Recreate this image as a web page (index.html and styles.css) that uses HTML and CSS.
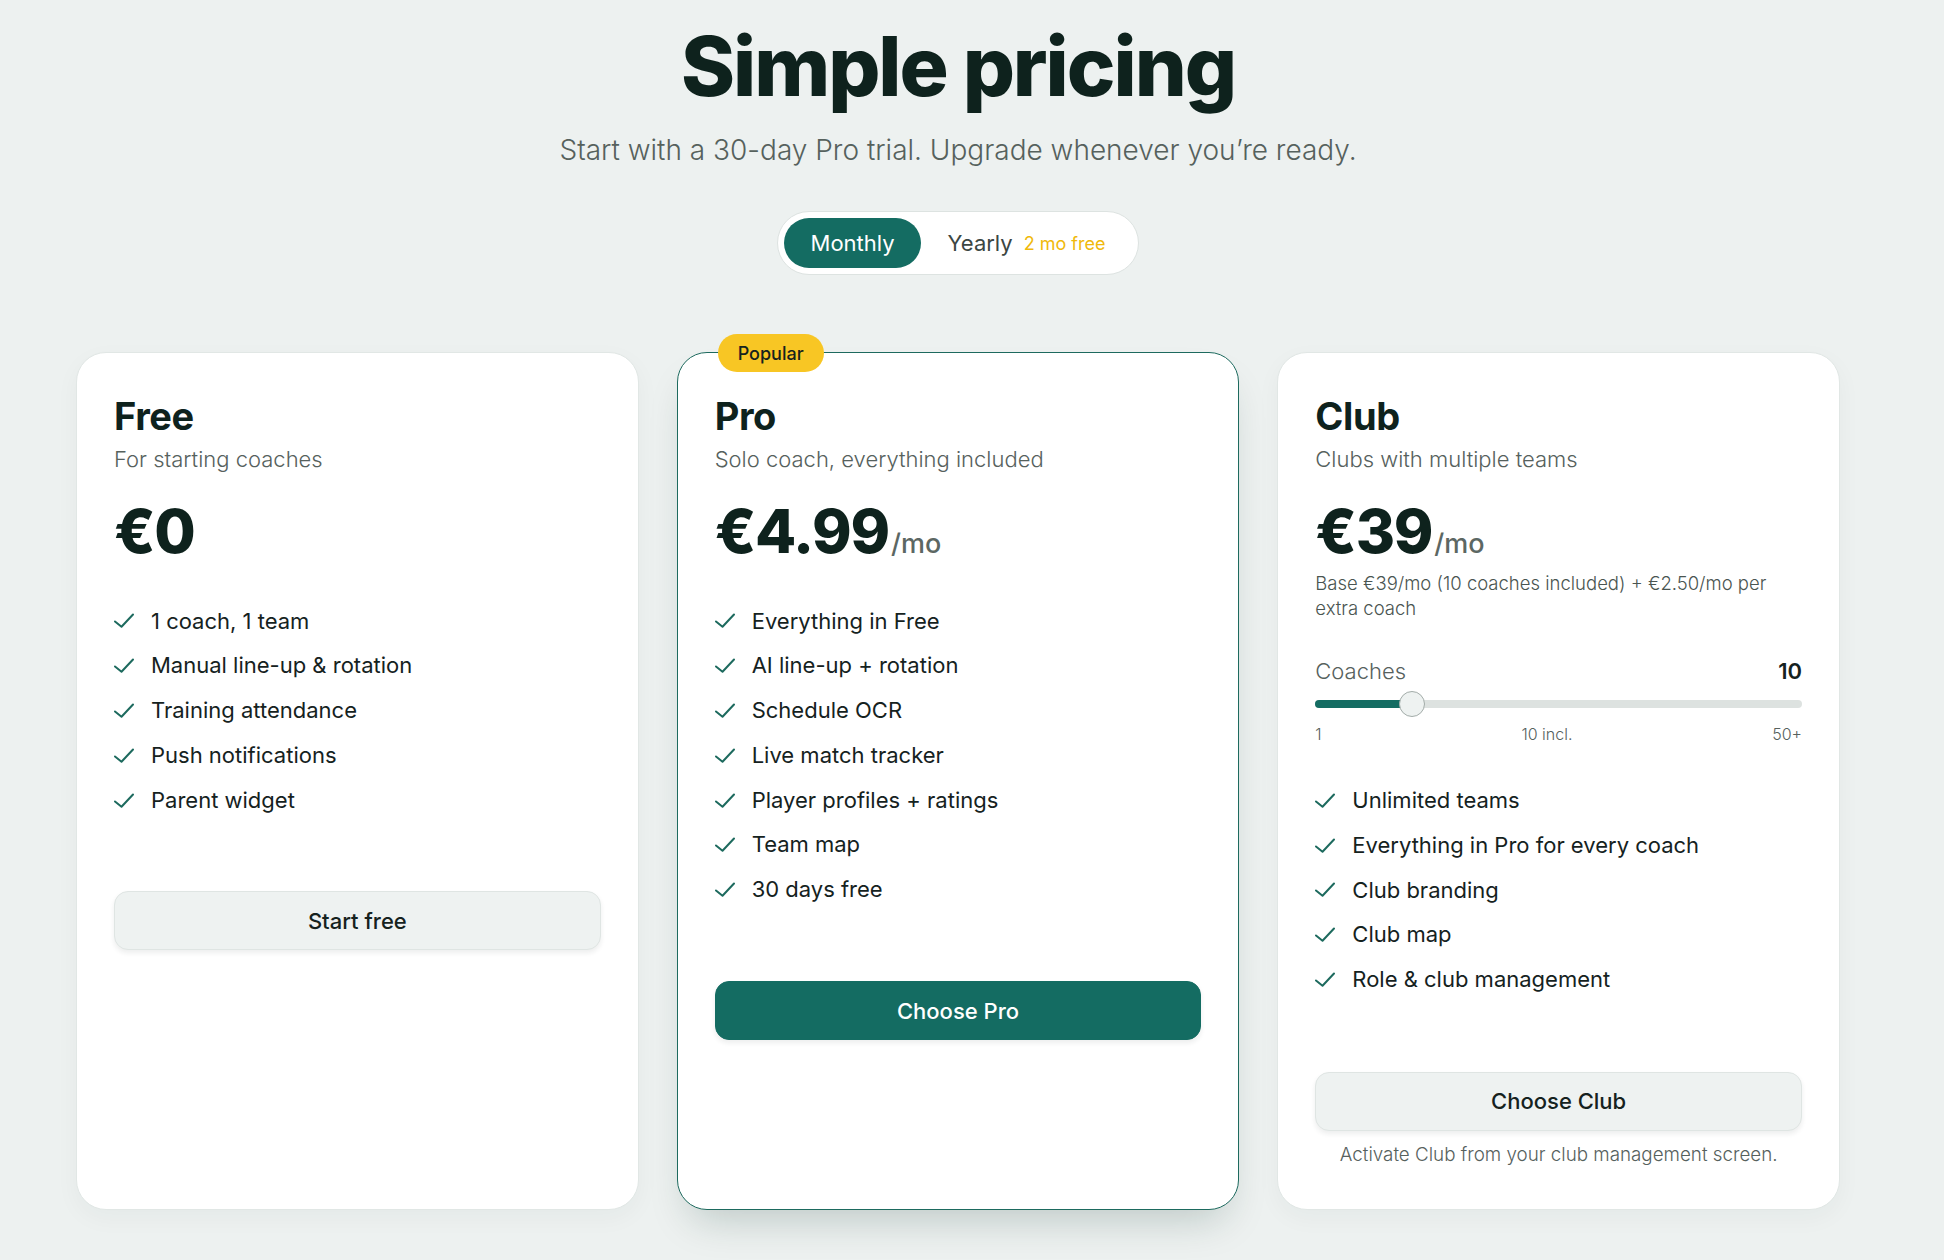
FILE: index.html
```html
<!DOCTYPE html>
<html lang="en">
<head>
<meta charset="utf-8">
<title>Simple pricing</title>
<link rel="stylesheet" href="styles.css">
</head>
<body>
<main class="page">
  <header class="hero">
    <h1 class="hero-title">Simple pricing</h1>
    <p class="hero-sub">Start with a 30-day Pro trial. Upgrade whenever you’re ready.</p>
    <div class="billing-toggle">
      <button class="toggle-btn is-active">Monthly</button>
      <button class="toggle-btn">Yearly <span class="toggle-note">2 mo free</span></button>
    </div>
  </header>

  <section class="plans">
    <article class="plan">
      <h2 class="plan-name">Free</h2>
      <p class="plan-tagline">For starting coaches</p>
      <div class="plan-price">€0</div>
      <ul class="features">
        <li class="feature"><svg class="check" viewBox="0 0 20 15"><path d="M1 8.5 7.5 13.8 19 1.5"/></svg>1 coach, 1 team</li>
        <li class="feature"><svg class="check" viewBox="0 0 20 15"><path d="M1 8.5 7.5 13.8 19 1.5"/></svg>Manual line-up &amp; rotation</li>
        <li class="feature"><svg class="check" viewBox="0 0 20 15"><path d="M1 8.5 7.5 13.8 19 1.5"/></svg>Training attendance</li>
        <li class="feature"><svg class="check" viewBox="0 0 20 15"><path d="M1 8.5 7.5 13.8 19 1.5"/></svg>Push notifications</li>
        <li class="feature"><svg class="check" viewBox="0 0 20 15"><path d="M1 8.5 7.5 13.8 19 1.5"/></svg>Parent widget</li>
      </ul>
      <button class="plan-btn">Start free</button>
    </article>

    <article class="plan plan--featured">
      <span class="plan-badge">Popular</span>
      <h2 class="plan-name">Pro</h2>
      <p class="plan-tagline">Solo coach, everything included</p>
      <div class="plan-price">€4.99<span class="plan-period">/mo</span></div>
      <ul class="features">
        <li class="feature"><svg class="check" viewBox="0 0 20 15"><path d="M1 8.5 7.5 13.8 19 1.5"/></svg>Everything in Free</li>
        <li class="feature"><svg class="check" viewBox="0 0 20 15"><path d="M1 8.5 7.5 13.8 19 1.5"/></svg>AI line-up + rotation</li>
        <li class="feature"><svg class="check" viewBox="0 0 20 15"><path d="M1 8.5 7.5 13.8 19 1.5"/></svg>Schedule OCR</li>
        <li class="feature"><svg class="check" viewBox="0 0 20 15"><path d="M1 8.5 7.5 13.8 19 1.5"/></svg>Live match tracker</li>
        <li class="feature"><svg class="check" viewBox="0 0 20 15"><path d="M1 8.5 7.5 13.8 19 1.5"/></svg>Player profiles + ratings</li>
        <li class="feature"><svg class="check" viewBox="0 0 20 15"><path d="M1 8.5 7.5 13.8 19 1.5"/></svg>Team map</li>
        <li class="feature"><svg class="check" viewBox="0 0 20 15"><path d="M1 8.5 7.5 13.8 19 1.5"/></svg>30 days free</li>
      </ul>
      <button class="plan-btn plan-btn--primary">Choose Pro</button>
    </article>

    <article class="plan">
      <h2 class="plan-name">Club</h2>
      <p class="plan-tagline">Clubs with multiple teams</p>
      <div class="plan-price">€39<span class="plan-period">/mo</span></div>
      <p class="plan-note">Base €39/mo (10 coaches included) + €2.50/mo per extra coach</p>
      <div class="coach-picker">
        <div class="coach-head"><span>Coaches</span><span class="coach-count">10</span></div>
        <div class="slider">
          <div class="slider-track"><div class="slider-fill" style="width:97px"></div></div>
          <div class="slider-thumb" style="left:84px"></div>
        </div>
        <div class="slider-scale"><span>1</span><span>10 incl.</span><span>50+</span></div>
      </div>
      <ul class="features features--club">
        <li class="feature"><svg class="check" viewBox="0 0 20 15"><path d="M1 8.5 7.5 13.8 19 1.5"/></svg>Unlimited teams</li>
        <li class="feature"><svg class="check" viewBox="0 0 20 15"><path d="M1 8.5 7.5 13.8 19 1.5"/></svg>Everything in Pro for every coach</li>
        <li class="feature"><svg class="check" viewBox="0 0 20 15"><path d="M1 8.5 7.5 13.8 19 1.5"/></svg>Club branding</li>
        <li class="feature"><svg class="check" viewBox="0 0 20 15"><path d="M1 8.5 7.5 13.8 19 1.5"/></svg>Club map</li>
        <li class="feature"><svg class="check" viewBox="0 0 20 15"><path d="M1 8.5 7.5 13.8 19 1.5"/></svg>Role &amp; club management</li>
      </ul>
      <button class="plan-btn plan-btn--club">Choose Club</button>
      <p class="plan-foot">Activate Club from your club management screen.</p>
    </article>
  </section>
</main>
</body>
</html>
```

FILE: styles.css
```css
* { box-sizing: border-box; }

body {
  margin: 0;
  background: #edf1f0;
  font-family: Inter, "Noto Sans", sans-serif;
  color: #15221e;
}

.page {
  padding: 22px 104px 54px 76px;
}

.hero {
  display: flex;
  flex-direction: column;
  align-items: center;
}

.hero-title {
  margin: 0;
  font-size: 82px;
  line-height: 90px;
  font-weight: 800;
  letter-spacing: -0.025em;
  color: #0e221d;
}

.hero-sub {
  margin: 20px 0 0;
  font-size: 28px;
  line-height: 36px;
  font-weight: 300;
  color: #56615d;
}

.billing-toggle {
  margin-top: 43px;
  display: flex;
  padding: 6px;
  background: #fff;
  border: 1px solid #dde3e1;
  border-radius: 999px;
}

.toggle-btn {
  font-family: inherit;
  font-size: 22px;
  font-weight: 400;
  border: 0;
  background: none;
  height: 50px;
  padding: 0 26.5px;
  border-radius: 999px;
  color: #3b4642;
  display: flex;
  align-items: center;
  gap: 11px;
}

.toggle-btn.is-active {
  background: #146c62;
  color: #fff;
}

.toggle-note {
  font-size: 18px;
  color: #f0b90b;
}

.plans {
  margin-top: 77px;
  display: grid;
  grid-template-columns: repeat(3, 1fr);
  gap: 38px;
}

.plan {
  position: relative;
  background: #fff;
  border: 1px solid #e1e7e5;
  border-radius: 30px;
  padding: 40px 37px 42px;
  display: flex;
  flex-direction: column;
  box-shadow: 0 8px 24px rgba(20, 50, 40, 0.04);
}

.plan--featured {
  border-color: #1d6a5e;
  box-shadow: 0 22px 40px -14px rgba(10, 50, 40, 0.22);
}

.plan-badge {
  position: absolute;
  top: -19px;
  left: 40px;
  height: 38px;
  padding: 0 20px;
  background: #f8c624;
  border-radius: 999px;
  font-size: 18px;
  font-weight: 500;
  color: #15221e;
  display: flex;
  align-items: center;
}

.plan-name {
  margin: 0;
  font-size: 38px;
  line-height: 46px;
  font-weight: 700;
  letter-spacing: -0.01em;
  color: #0e221d;
}

.plan-tagline {
  margin: 5px 0 0;
  font-size: 22px;
  line-height: 30px;
  font-weight: 300;
  color: #56615d;
}

.plan-price {
  margin-top: 27px;
  display: flex;
  align-items: baseline;
  height: 60px;
  font-size: 60px;
  line-height: 60px;
  font-weight: 800;
  letter-spacing: -0.02em;
  color: #0e221d;
}

.plan-period {
  margin-left: 2px;
  font-size: 27px;
  line-height: 27px;
  font-weight: 500;
  letter-spacing: 0;
  color: #5c6763;
}

.plan-note {
  margin: 10px 0 0;
  font-size: 18.5px;
  line-height: 25px;
  font-weight: 300;
  color: #4a5551;
}

.coach-picker {
  margin-top: 35px;
}

.coach-head {
  display: flex;
  justify-content: space-between;
  font-size: 22px;
  line-height: 30px;
  font-weight: 300;
  color: #56615d;
}

.coach-count {
  font-weight: 600;
  color: #15221e;
}

.slider {
  position: relative;
  height: 26px;
  margin-top: 5px;
  display: flex;
  align-items: center;
}

.slider-track {
  width: 100%;
  height: 8px;
  background: #dde2e0;
  border-radius: 4px;
  overflow: hidden;
}

.slider-fill {
  height: 100%;
  background: #146c62;
}

.slider-thumb {
  position: absolute;
  top: 0;
  width: 26px;
  height: 26px;
  border-radius: 50%;
  background: #eef2f1;
  border: 1.5px solid #a3aca9;
}

.slider-scale {
  display: flex;
  justify-content: space-between;
  margin-top: 6px;
  font-size: 16px;
  line-height: 22px;
  font-weight: 300;
  color: #56615d;
}

.features {
  list-style: none;
  margin: 44.5px 0 0;
  padding: 0;
  display: flex;
  flex-direction: column;
  gap: 14px;
}

.features--club {
  margin-top: 40px;
}

.feature {
  display: flex;
  align-items: center;
  gap: 17px;
  font-size: 22px;
  line-height: 30.8px;
  color: #15221e;
}

.check {
  width: 20px;
  height: 15px;
  flex: none;
  fill: none;
  stroke: #1d6a5e;
  stroke-width: 2;
  stroke-linecap: round;
  stroke-linejoin: round;
}

.plan-btn {
  margin-top: 76px;
  height: 59px;
  border-radius: 14px;
  font-family: inherit;
  font-size: 22px;
  font-weight: 500;
  border: 1px solid #dfe5e3;
  background: #eef2f1;
  color: #15221e;
  box-shadow: 0 3px 5px rgba(20, 40, 35, 0.08);
}

.plan-btn--club {
  margin-top: 77px;
}

.plan-btn--primary {
  background: #146c62;
  border-color: #146c62;
  color: #fff;
}

.plan-foot {
  margin: 12px 0 0;
  text-align: center;
  font-size: 18.8px;
  line-height: 24px;
  font-weight: 300;
  color: #56615d;
}
```
